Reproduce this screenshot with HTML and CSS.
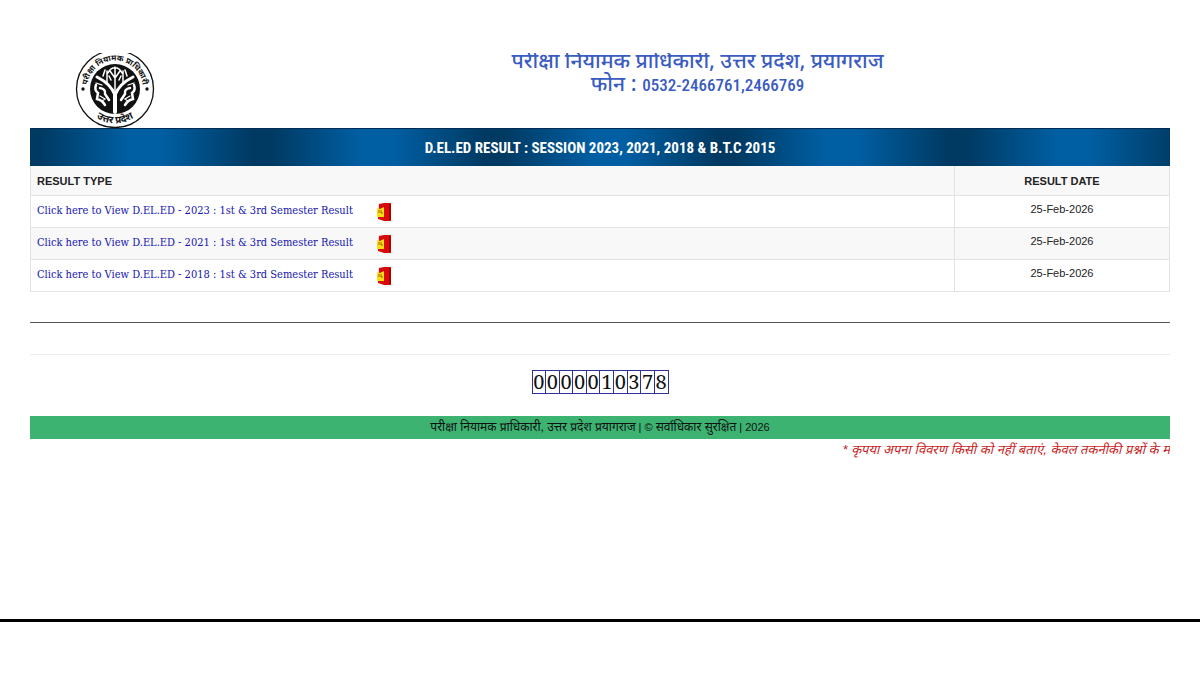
FILE: index.html
```html
<!DOCTYPE html>
<html lang="hi">
<head>
<meta charset="utf-8">
<title>D.EL.ED Result</title>
<link rel="stylesheet" href="styles.css">
</head>
<body>
<div class="page">
  <header class="masthead">
    <svg class="logo" viewBox="0 0 80 80" role="img" aria-label="परीक्षा नियामक प्राधिकारी उत्तर प्रदेश">
      <defs>
        <path id="arc-top" d="M12.500 45A28 28 0 1 1 67.500 45"/>
        <path id="arc-bottom" d="M13 61A34 34 0 0 0 67 61"/>
      </defs>
      <circle cx="40" cy="40" r="38.500" fill="#fff" stroke="#111" stroke-width="1.300"/>
      <circle cx="40" cy="40" r="25" fill="#111"/>
      <g fill="none" stroke="#fff" stroke-linecap="round">
        <path stroke-width="4" d="M40 63V45"/>
        <path stroke-width="3" d="M40 46C37 38 30 32 22 28M40 46C43 38 50 32 58 28"/>
        <path stroke-width="1.500" d="M40 42V18M40 29L35 22M40 29L45 22M32 34V22M48 34V22M33 24C36 17 44 17 47 24M28 27L30 21M52 27L50 21M36 31L34 27M44 31L46 27"/>
        <path stroke-width="2.500" d="M21 36Q19 41 23 44L22 50Q27 51 30 56M59 36Q61 41 57 44L58 50Q53 51 50 56M25 39Q31 40 30 45L34 51M55 39Q49 40 50 45L46 51"/>
        <path stroke-width="1.300" d="M25 47L30 50L27 52M55 47L50 50L53 52M21 34L27 36M59 34L53 36"/>
      </g>
      <circle cx="8" cy="40" r="1.700" fill="#111"/>
      <circle cx="72" cy="40" r="1.700" fill="#111"/>
      <text class="seal-text"><textPath href="#arc-top" startOffset="50%" text-anchor="middle">परीक्षा नियामक प्राधिकारी</textPath></text>
      <text class="seal-text seal-foot"><textPath href="#arc-bottom" startOffset="50%" text-anchor="middle">उत्तर प्रदेश</textPath></text>
    </svg>
    <h1 class="org">परीक्षा नियामक प्राधिकारी, उत्तर प्रदेश, प्रयागराज<br>फोन : <span class="phone">0532-2466761,2466769</span></h1>
  </header>

  <h2 class="banner">D.EL.ED RESULT : SESSION 2023, 2021, 2018 &amp; B.T.C 2015</h2>

  <table class="results">
    <thead>
      <tr><th scope="col">RESULT TYPE</th><th scope="col" class="date">RESULT DATE</th></tr>
    </thead>
    <tbody>
      <tr>
        <td><a href="#r2023">Click here to View D.EL.ED - 2023 : 1st &amp; 3rd Semester Result</a><svg class="new" viewBox="0 0 16 18" aria-hidden="true"><path fill="#d80a0a" d="M3 1L8 0H15V18H8L2 16Z"/><path fill="#f2e213" d="M1 5L4 6L8 4V14L1 14Z"/><path fill="none" stroke="#b85a00" d="M3 7V10M5 7V10H7"/><path fill="#a90000" d="M13 1H15V17H13Z"/></svg></td>
        <td class="date">25-Feb-2026</td>
      </tr>
      <tr>
        <td><a href="#r2021">Click here to View D.EL.ED - 2021 : 1st &amp; 3rd Semester Result</a><svg class="new" viewBox="0 0 16 18" aria-hidden="true"><path fill="#d80a0a" d="M3 1L8 0H15V18H8L2 16Z"/><path fill="#f2e213" d="M1 5L4 6L8 4V14L1 14Z"/><path fill="none" stroke="#b85a00" d="M3 7V10M5 7V10H7"/><path fill="#a90000" d="M13 1H15V17H13Z"/></svg></td>
        <td class="date">25-Feb-2026</td>
      </tr>
      <tr>
        <td><a href="#r2018">Click here to View D.EL.ED - 2018 : 1st &amp; 3rd Semester Result</a><svg class="new" viewBox="0 0 16 18" aria-hidden="true"><path fill="#d80a0a" d="M3 1L8 0H15V18H8L2 16Z"/><path fill="#f2e213" d="M1 5L4 6L8 4V14L1 14Z"/><path fill="none" stroke="#b85a00" d="M3 7V10M5 7V10H7"/><path fill="#a90000" d="M13 1H15V17H13Z"/></svg></td>
        <td class="date">25-Feb-2026</td>
      </tr>
    </tbody>
  </table>

  <hr class="rule">
  <hr class="rule rule-light">

  <div class="counter"><span>0</span><span>0</span><span>0</span><span>0</span><span>0</span><span>1</span><span>0</span><span>3</span><span>7</span><span>8</span></div>

  <footer class="copyright">परीक्षा नियामक प्राधिकारी, उत्तर प्रदेश प्रयागराज<span class="latin"> | © </span>सर्वाधिकार सुरक्षित<span class="latin"> | 2026</span></footer>
  <p class="notice">* कृपया अपना विवरण किसी को नहीं बताएं, केवल तकनीकी प्रश्नों के म</p>
</div>
<hr class="page-end">
</body>
</html>
```
FILE: styles.css
```css
body {
  margin: 0;
  background: #fff;
  color: #222;
  font: 11px/16px "Liberation Sans", "Noto Sans Devanagari", "Noto Sans", sans-serif;
}

.page {
  padding: 53px 30px 0;
}

.masthead {
  display: grid;
  grid-template-columns: 195px 1fr;
  height: 75px;
  overflow: hidden;
}

.logo {
  width: 80px;
  height: 80px;
  margin: -4px 0 0 45px;
}

.seal-text {
  font: bold 8px "Noto Sans Devanagari", "Noto Sans", sans-serif;
  fill: #111;
}

.seal-foot {
  font-size: 10px;
}

.org {
  margin: -1px 0 0;
  color: #3a5bbf;
  font: 500 21px/22px "Noto Sans Devanagari", "Noto Sans", sans-serif;
  text-align: center;
}

.phone {
  font-family: "Roboto Condensed", "Liberation Sans", sans-serif;
  font-size: 17px;
}

.banner {
  margin: 0;
  padding: 8px 0 7px;
  border-top: 1px solid #002b55;
  background: repeating-linear-gradient(90deg, #003a63 0, #003a63 10px, #005fa3 100px, #005fa3 130px, #003a63 222px, #003a63 232px);
  color: #fff;
  font: bold 15px/22px "Roboto Condensed", "Liberation Sans", sans-serif;
  text-align: center;
}

.results {
  width: 100%;
  border-collapse: collapse;
}

.results th,
.results td {
  height: 19px;
  padding: 6px;
  border: 1px solid #e3e3e3;
  text-align: left;
}

.results th {
  height: 17px;
  border-top: 0;
}

.results thead tr,
.results tbody tr:nth-child(even) {
  background: #f8f8f8;
}

.results .date {
  width: 202px;
  text-align: center;
}

.results td.date {
  height: 16px;
  padding: 5px 6px 10px;
}

.results a {
  color: #1414b0;
  font: 11px/18px "DejaVu Serif Condensed", "Noto Serif", serif;
  text-decoration: none;
}

.new {
  width: 16px;
  height: 18px;
  margin-left: 23px;
  vertical-align: middle;
}

.rule {
  margin: 30px 0 31px;
  border: 0;
  border-top: 1px solid #555;
}

.rule-light {
  margin: 0;
  border-color: #eee;
}

.counter {
  display: flex;
  width: 135px;
  margin: 15px auto 22px;
  border: 1px solid #3030a0;
  color: #111;
  font: 20px/22px "Noto Serif", "DejaVu Serif", serif;
}

.counter span {
  flex: 1 1 0;
  text-align: center;
}

.counter span + span {
  border-left: 1px solid #3030a0;
}

.copyright {
  padding: 3px 0 4px;
  background: #3cb371;
  color: #111;
  font-size: 12px;
  text-align: center;
}

.latin {
  font-size: 11px;
}

.notice {
  margin: 0;
  overflow: hidden;
  color: #c81e1e;
  font: italic 13px/22px "Liberation Sans", "Noto Sans Devanagari", "Noto Sans", sans-serif;
  text-align: right;
  white-space: nowrap;
}

.page-end {
  margin: 158px 0 0;
  border: 0;
  border-top: 3px solid #000;
}
```
